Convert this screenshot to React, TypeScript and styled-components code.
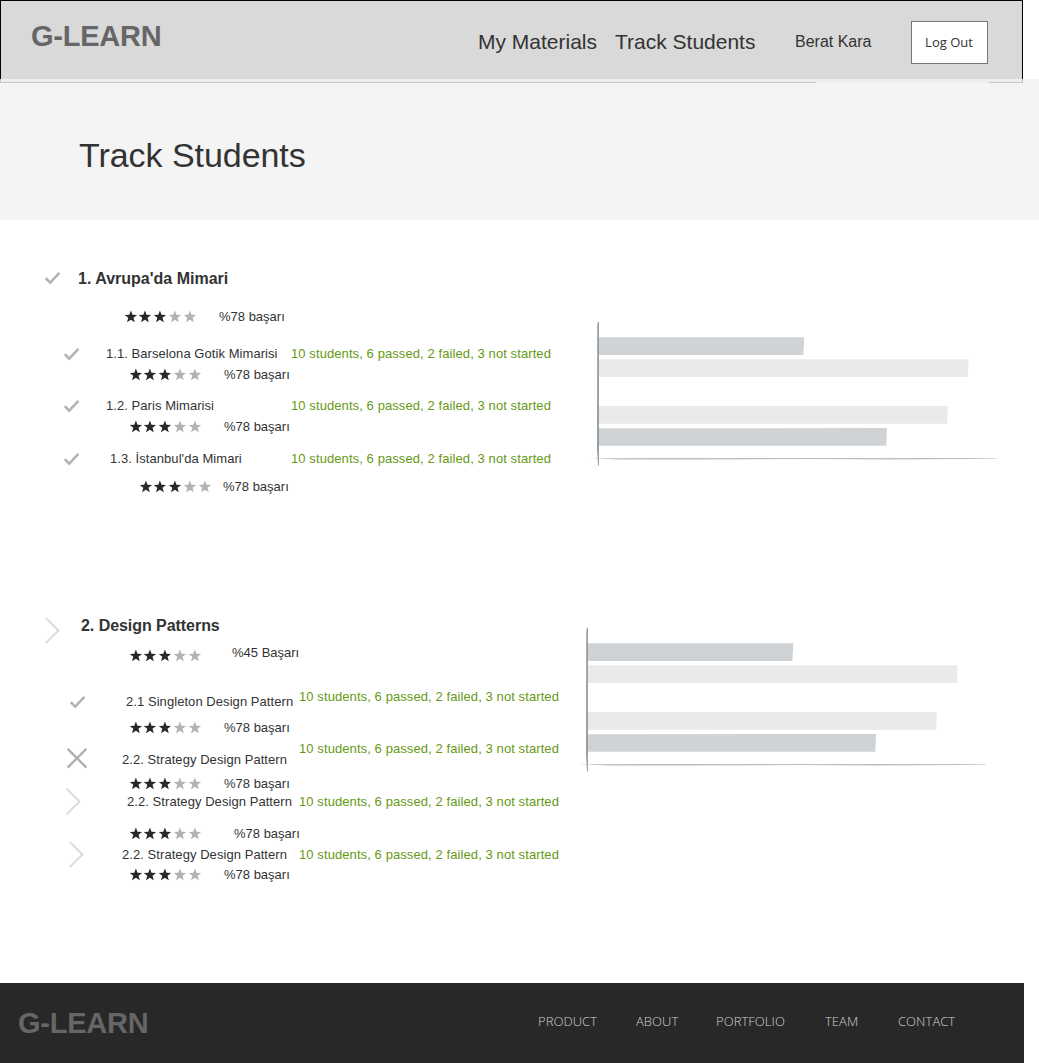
import React from "react";
import styled, { createGlobalStyle } from "styled-components";

const Global = createGlobalStyle`
  * { box-sizing: border-box; }
  body { margin: 0; background: #fff; color: #333; font-family: "Liberation Sans", Arial, sans-serif; }
`;

const Page = styled.div`
  width: 1039px;
  height: 1063px;
  display: flex;
  flex-direction: column;
  overflow: hidden;
`;

const Header = styled.header`
  width: 1023px;
  height: 79px;
  display: flex;
  align-items: flex-start;
  border: 1px solid #000;
  border-bottom: 0;
  background: #d9d9d9;
  white-space: nowrap;
`;

const Logo = styled.div<{ $left: number; $top: number; $color: string }>`
  margin: ${(p) => p.$top}px 0 0 ${(p) => p.$left}px;
  width: 140px;
  color: ${(p) => p.$color};
  font-size: 29px;
  font-weight: 700;
  line-height: 34px;
  letter-spacing: -0.25px;
  white-space: nowrap;
`;

const Nav = styled.nav`
  display: flex;
  margin: 29px 0 0 307px;
`;

const NavLink = styled.a<{ $width: number }>`
  width: ${(p) => p.$width}px;
  font-size: 21px;
  line-height: 24px;
`;

const UserName = styled.div`
  margin-top: 31px;
  width: 116px;
  font-size: 16px;
  line-height: 20px;
`;

const LogOut = styled.button`
  margin-top: 20px;
  width: 77px;
  height: 43px;
  padding: 0 1px 1px 0;
  border: 1px solid #777;
  background: #fff;
  color: #333;
  font: 13px "Open Sans", sans-serif;
`;

const Hero = styled.section`
  height: 141px;
  background: #f4f4f4;
`;

const HeaderEdge = styled.div`
  display: flex;
  width: 1023px;
  height: 4px;
  background: #eee;
`;

const EdgeLine = styled.div<{ $width: number; $side: "left" | "right" }>`
  width: ${(p) => p.$width}px;
  border-bottom: 1px solid #c6c6c6;
  border-${(p) => p.$side}: 1px solid #c6c6c6;
  margin-${(p) => p.$side === "right" ? "left" : "right"}: auto;
`;

const PageTitle = styled.h1`
  margin: 52px 0 0 79px;
  font-size: 34px;
  font-weight: 400;
  line-height: 40px;
  letter-spacing: -0.05px;
`;

const Course = styled.section<{ $height: number }>`
  display: flex;
  height: ${(p) => p.$height}px;
`;

const Outline = styled.div<{ $width: number }>`
  width: ${(p) => p.$width}px;
  flex: none;
  display: flex;
  flex-direction: column;
`;

const Entry = styled.div<{ $height: number }>`
  display: flex;
  align-items: flex-start;
  height: ${(p) => p.$height}px;
  flex: none;
`;

const IconSlot = styled.div<{ $x: number; $y: number; $width: number }>`
  width: ${(p) => p.$width}px;
  flex: none;
  padding: ${(p) => p.$y}px 0 0 ${(p) => p.$x}px;
  svg { display: block; }
`;

const Body = styled.div<{ $width: number }>`
  width: ${(p) => p.$width}px;
  flex: none;
  white-space: nowrap;
`;

const CourseTitle = styled.h2<{ $x: number; $y: number; $spacing: number }>`
  margin: 0;
  padding: ${(p) => p.$y}px 0 0 ${(p) => p.$x}px;
  font-size: 16px;
  line-height: 20px;
  letter-spacing: ${(p) => p.$spacing}px;
`;

const LessonTitle = styled.div<{ $x: number; $y: number }>`
  padding: ${(p) => p.$y}px 0 0 ${(p) => p.$x}px;
  font-size: 13px;
  line-height: 16px;
  letter-spacing: 0.06px;
`;

const RatingLine = styled.div<{ $x: number; $y: number }>`
  display: flex;
  padding: ${(p) => p.$y}px 0 0 ${(p) => p.$x}px;
  svg { display: block; flex: none; }
`;

const Score = styled.span<{ $gap: number; $raise: number }>`
  margin: -${(p) => p.$raise}px 0 0 ${(p) => p.$gap}px;
  font-size: 13px;
  line-height: 16px;
`;

const Stats = styled.div<{ $y: number }>`
  padding-top: ${(p) => p.$y}px;
  color: #669914;
  font-size: 13px;
  line-height: 16px;
  letter-spacing: 0.09px;
  white-space: nowrap;
`;

const ChartArea = styled.div<{ $top: number }>`
  padding-top: ${(p) => p.$top}px;
  svg { display: block; }
`;

const Footer = styled.footer`
  width: 1024px;
  height: 80px;
  display: flex;
  align-items: flex-start;
  background: #282828;
`;

const FooterNav = styled.nav`
  display: flex;
  margin: 29px 0 0 380px;
`;

const FooterLink = styled.a<{ $width: number }>`
  width: ${(p) => p.$width}px;
  color: #d0d0d0;
  font: 300 13px/18px "Open Sans", sans-serif;
  letter-spacing: 0.05px;
  white-space: nowrap;
`;

type Status = "check" | "cross" | "chevron";

const StatusIcon = ({ kind }: { kind: Status }) => {
  if (kind === "check")
    return (
      <svg width="16" height="13" viewBox="0 0 16 13" fill="none" stroke="#b2b2b2" strokeWidth="2.5">
        <path d="M0.8 6.2 L5.2 10.6 L14.4 0.9" />
      </svg>
    );
  if (kind === "cross")
    return (
      <svg width="21" height="21" viewBox="0 0 21 21" fill="none" stroke="#b0b0b0" strokeWidth="2.4">
        <path d="M0.6 0.8 L19.4 19.6 M19.4 0.8 L0.6 19.6" />
      </svg>
    );
  return (
    <svg width="16" height="28" viewBox="0 0 16 28" fill="none" stroke="#dcdcdc" strokeWidth="2">
      <path d="M0.7 0.7 L13.5 13.5 L0.7 26.3" />
    </svg>
  );
};

const Stars = () => (
  <svg width="72" height="12" viewBox="0 0 72 12" overflow="visible">
    {[0, 14, 29, 44, 59].map((x, i) => (
      <path
        key={x}
        transform={`translate(${x} 0)`}
        fill={i < 3 ? "#282828" : "#b2b2b2"}
        d="M5.9 -0.6 L7.5 3.8 L12.1 3.9 L8.5 6.8 L9.8 11.2 L5.9 8.7 L2 11.2 L3.3 6.8 L-0.3 3.9 L4.3 3.8 Z"
      />
    ))}
  </svg>
);

const Chart = () => (
  <svg width="410" height="148" viewBox="0 0 410 148">
    <path d="M9 16.3 L215.3 16.2 L214.3 34 L9 34 Z" fill="#cfd3d6" />
    <path d="M9 38.2 H379.5 L379 56 H9 Z" fill="#e9eaec" />
    <path d="M9 85 H358.8 L358.3 102.8 H9 Z" fill="#e9eaec" />
    <path d="M9 107.3 L298 107 L297.3 124.8 H9 Z" fill="#cfd3d6" />
    <path d="M8.9 0.8 L9.9 1 L9.9 144.5 L9 144.5 L8.1 128 L8.3 5 Z" fill="#8d9597" />
    <path d="M0 137.2 L70 136.9 L280 137 L408 137.1 L408 137.5 L382 138.1 L300 138.5 L220 138.1 L110 138.6 L30 138.5 Z" fill="#bebebe" />
  </svg>
);

const STATS = "10 students, 6 passed, 2 failed, 3 not started";

interface Lesson {
  height: number;
  kind: Status;
  iconX: number;
  iconY: number;
  title: string;
  titleX: number;
  titleY?: number;
  statsY?: number;
  ratingX: number;
  ratingY: number;
  gap: number;
}

/* Column origin of the lesson text, measured from the page's left edge. */
const TEXT_X = 100;

const first: Lesson[] = [
  { height: 52, kind: "check", iconX: 64, iconY: 2, title: "1.1. Barselona Gotik Mimarisi", titleX: 6, ratingX: 30, ratingY: 7, gap: 22 },
  { height: 53, kind: "check", iconX: 64, iconY: 2, title: "1.2. Paris Mimarisi", titleX: 6, ratingX: 30, ratingY: 7, gap: 22 },
  { height: 53, kind: "check", iconX: 64, iconY: 2, title: "1.3. İstanbul'da Mimari", titleX: 10, ratingX: 40, ratingY: 14, gap: 11 },
];

const second: Lesson[] = [
  { height: 52, kind: "check", iconX: 70, iconY: 7, title: "2.1 Singleton Design Pattern", titleX: 26, titleY: 5, ratingX: 30, ratingY: 12, gap: 22 },
  { height: 53, kind: "cross", iconX: 67, iconY: 7, title: "2.2. Strategy Design Pattern", titleX: 22, titleY: 11, ratingX: 30, ratingY: 10, gap: 22 },
  { height: 53, kind: "chevron", iconX: 66, iconY: -6, title: "2.2. Strategy Design Pattern", titleX: 27, ratingX: 30, ratingY: 18, gap: 32 },
  { height: 53, kind: "chevron", iconX: 69, iconY: -6, title: "2.2. Strategy Design Pattern", titleX: 22, ratingX: 30, ratingY: 6, gap: 22 },
];

const Lift = styled.div<{ $by: number }>`
  margin-top: ${(p) => Math.min(p.$by, 0)}px;
`;

const LessonEntry = ({ lesson, statsX }: { lesson: Lesson; statsX: number }) => (
  <Entry $height={lesson.height}>
    <IconSlot $x={lesson.iconX} $y={Math.max(lesson.iconY, 0)} $width={TEXT_X}>
      <Lift $by={lesson.iconY}>
        <StatusIcon kind={lesson.kind} />
      </Lift>
    </IconSlot>
    <Body $width={statsX - TEXT_X}>
      <LessonTitle $x={lesson.titleX} $y={lesson.titleY ?? 0}>{lesson.title}</LessonTitle>
      <RatingLine $x={lesson.ratingX} $y={lesson.ratingY}>
        <Stars />
        <Score $gap={lesson.gap} $raise={2}>%78 başarı</Score>
      </RatingLine>
    </Body>
    <Stats $y={lesson.statsY ?? 0}>{STATS}</Stats>
  </Entry>
);

export default function App() {
  return (
    <Page>
      <Global />
      <Header>
        <Logo $left={30} $top={18} $color="#666">G-LEARN</Logo>
        <Nav>
          <NavLink $width={137}>My Materials</NavLink>
          <NavLink $width={180}>Track Students</NavLink>
        </Nav>
        <UserName>Berat Kara</UserName>
        <LogOut>Log Out</LogOut>
      </Header>
      <Hero>
        <HeaderEdge>
          <EdgeLine $width={816} $side="left" />
          <EdgeLine $width={34} $side="right" />
        </HeaderEdge>
        <PageTitle>Track Students</PageTitle>
      </Hero>

      <Course $height={396}>
        <Outline $width={589}>
          <Entry $height={126}>
            <IconSlot $x={45} $y={52} $width={78}><StatusIcon kind="check" /></IconSlot>
            <Body $width={240}>
              <CourseTitle $x={0} $y={49} $spacing={0}>1. Avrupa'da Mimari</CourseTitle>
              <RatingLine $x={47} $y={22}>
                <Stars />
                <Score $gap={22} $raise={2}>%78 başarı</Score>
              </RatingLine>
            </Body>
          </Entry>
          {first.map((l) => <LessonEntry key={l.title} lesson={l} statsX={291} />)}
        </Outline>
        <ChartArea $top={101}><Chart /></ChartArea>
      </Course>

      <Course $height={367}>
        <Outline $width={578}>
          <Entry $height={73}>
            <IconSlot $x={45} $y={1} $width={81}><StatusIcon kind="chevron" /></IconSlot>
            <Body $width={240}>
              <CourseTitle $x={0} $y={0} $spacing={-0.05}>2. Design Patterns</CourseTitle>
              <RatingLine $x={49} $y={14}>
                <Stars />
                <Score $gap={30} $raise={5}>%45 Başarı</Score>
              </RatingLine>
            </Body>
          </Entry>
          {second.map((l, i) => <LessonEntry key={i} lesson={l} statsX={299} />)}
        </Outline>
        <ChartArea $top={11}><Chart /></ChartArea>
      </Course>

      <Footer>
        <Logo $left={18} $top={23} $color="#666">G-LEARN</Logo>
        <FooterNav>
          <FooterLink $width={98}>PRODUCT</FooterLink>
          <FooterLink $width={80}>ABOUT</FooterLink>
          <FooterLink $width={109}>PORTFOLIO</FooterLink>
          <FooterLink $width={73}>TEAM</FooterLink>
          <FooterLink $width={60}>CONTACT</FooterLink>
        </FooterNav>
      </Footer>
    </Page>
  );
}
